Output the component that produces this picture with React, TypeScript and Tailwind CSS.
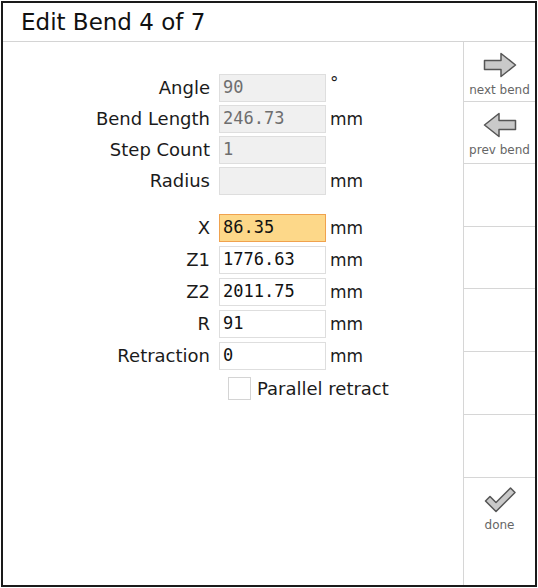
import React from 'react';

const labelFont = { fontFamily: '"DejaVu Sans", "Liberation Sans", sans-serif' };

function ArrowIcon({ flip = false }: { flip?: boolean }) {
  return (
    <svg width="34" height="26" viewBox="0 0 34 26" className={flip ? '-scale-x-100' : ''}>
      <path
        d="M1.5 8.5 H18 V1.5 L32.5 13 L18 24.5 V17.5 H1.5 Z"
        fill="#c9c9c9"
        stroke="#555"
        strokeWidth="1.5"
        strokeLinejoin="round"
      />
    </svg>
  );
}

function CheckIcon() {
  return (
    <svg width="32" height="27" viewBox="0 0 32 27">
      <path
        d="M1.5 15 L6 10.5 L12 16.5 L26.5 2 L31 6.5 L12 25.5 Z"
        fill="#c9c9c9"
        stroke="#555"
        strokeWidth="1.5"
        strokeLinejoin="round"
      />
    </svg>
  );
}

type Field = { label: string; value: string; unit?: string; disabled?: boolean; active?: boolean };

const group1: Field[] = [
  { label: 'Angle', value: '90', unit: '°', disabled: true },
  { label: 'Bend Length', value: '246.73', unit: 'mm', disabled: true },
  { label: 'Step Count', value: '1', disabled: true },
  { label: 'Radius', value: '', unit: 'mm', disabled: true },
];

const group2: Field[] = [
  { label: 'X', value: '86.35', unit: 'mm', active: true },
  { label: 'Z1', value: '1776.63', unit: 'mm' },
  { label: 'Z2', value: '2011.75', unit: 'mm' },
  { label: 'R', value: '91', unit: 'mm' },
  { label: 'Retraction', value: '0', unit: 'mm' },
];

function Row({ f }: { f: Field }) {
  const box = f.active
    ? 'bg-[#fdd889] border-[#f0a24e] text-[#111]'
    : f.disabled
    ? 'bg-[#f0f0f0] border-[#dedede] text-[#6e6e6e]'
    : 'bg-white border-[#dedede] text-[#111]';
  return (
    <div className="flex items-center h-[28px]">
      <div className="w-[207px] text-right text-[18px] text-[#1b1b1b] leading-none" style={labelFont}>
        {f.label}
      </div>
      <div
        className={`ml-[9px] w-[107px] h-[28px] border flex items-center pl-[3px] text-[17px] ${box}`}
        style={{ fontFamily: '"DejaVu Sans Mono", "Liberation Mono", monospace' }}
      >
        {f.value}
      </div>
      {f.unit === '°' ? (
        <span className="ml-[4px] self-start -mt-[3px] text-[17px] text-[#1b1b1b]" style={labelFont}>
          °
        </span>
      ) : f.unit ? (
        <span className="ml-[4px] text-[17px] text-[#1b1b1b] leading-none" style={labelFont}>
          {f.unit}
        </span>
      ) : null}
    </div>
  );
}

function SideButton({ h, children }: { h: string; children?: React.ReactNode }) {
  return (
    <div className={`${h} border-b border-[#d6d6d6] flex flex-col items-center pt-[10px]`}>{children}</div>
  );
}

export default function App() {
  return (
    <div className="w-[538px] h-[588px] bg-white">
      <div className="ml-px mt-px w-[536px] h-[586px] border-2 border-[#1a1a1a] flex flex-col bg-white" style={labelFont}>
        {/* header */}
        <div className="h-[39px] border-b border-[#d4d4d4] flex items-center pl-[18px]">
          <span className="text-[23px] text-[#111] leading-none">Edit Bend 4 of 7</span>
        </div>

        <div className="flex flex-1">
          {/* form */}
          <div className="flex-1 flex flex-col pt-[32px]">
            <div className="flex flex-col gap-[3px]">
              {group1.map((f) => (
                <Row key={f.label} f={f} />
              ))}
            </div>
            <div className="flex flex-col gap-[4px] mt-[19px]">
              {group2.map((f) => (
                <Row key={f.label} f={f} />
              ))}
            </div>
            <div className="flex items-center mt-[5px] pl-[225px]">
              <div className="w-[23px] h-[23px] border border-[#d4d4d4] bg-white" />
              <span className="ml-[6px] text-[18px] text-[#1b1b1b]">Parallel retract</span>
            </div>
          </div>

          {/* side buttons */}
          <div className="w-[72px] border-l border-[#d6d6d6] flex flex-col">
            <SideButton h="h-[60px]">
              <ArrowIcon />
              <span className="text-[12px] text-[#666] mt-[3px]">next bend</span>
            </SideButton>
            <SideButton h="h-[62px]">
              <ArrowIcon flip />
              <span className="text-[12px] text-[#666] mt-[3px]">prev bend</span>
            </SideButton>
            <SideButton h="h-[63px]" />
            <SideButton h="h-[62px]" />
            <SideButton h="h-[63px]" />
            <SideButton h="h-[63px]" />
            <SideButton h="h-[63px]" />
            <div className="flex-1 flex flex-col items-center pt-[8px]">
              <CheckIcon />
              <span className="text-[12px] text-[#666] mt-[3px]">done</span>
            </div>
          </div>
        </div>
      </div>
    </div>
  );
}
